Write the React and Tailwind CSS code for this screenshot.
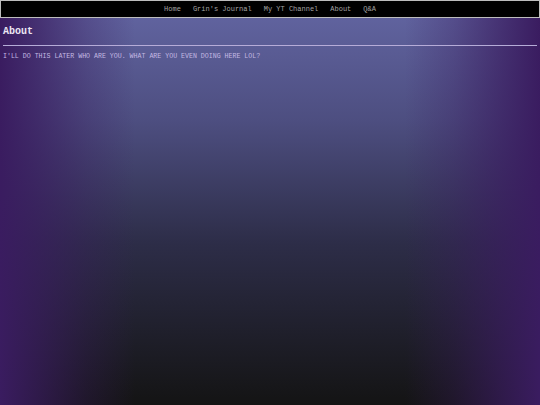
const links = ['Home', "Grin's Journal", 'My YT Channel', 'About', 'Q&A'];

const App = () => {
  return (
    <div
      className="relative min-h-[405px] w-full overflow-hidden bg-[linear-gradient(to_bottom,#6366a3_0%,#4d4e80_30%,#2d2d48_60%,#141414_100%)]"
      style={{ fontFamily: '"Liberation Mono", "Courier New", monospace' }}
    >
      {/* purple side glow */}
      <div className="pointer-events-none absolute inset-0 bg-[linear-gradient(to_right,rgba(58,28,96,1)_0%,rgba(58,28,96,0.7)_7%,rgba(58,28,96,0.3)_16%,rgba(58,28,96,0)_25%,rgba(58,28,96,0)_75%,rgba(58,28,96,0.3)_84%,rgba(58,28,96,0.7)_93%,rgba(58,28,96,1)_100%)]" />

      <div className="relative">
        {/* nav */}
        <nav className="flex h-[18px] items-center justify-center gap-[12px] border border-[#bdbdbd] bg-black">
          {links.map(l => (
            <span key={l} className="text-[7px] leading-none text-[#a4a4a4]">{l}</span>
          ))}
        </nav>

        <div className="px-[3px]">
          <h1 className="mt-[9px] text-[10px] font-bold leading-none text-[#ece6f4]">About</h1>
          <hr className="mt-[8px] border-0 border-t border-[#b6acd8]" />
          <p className="mt-[8px] text-[6.6px] leading-none text-[#c3b8e2]">
            I'LL DO THIS LATER WHO ARE YOU. WHAT ARE YOU EVEN DOING HERE LOL?
          </p>
        </div>
      </div>
    </div>
  );
};

export default App;
